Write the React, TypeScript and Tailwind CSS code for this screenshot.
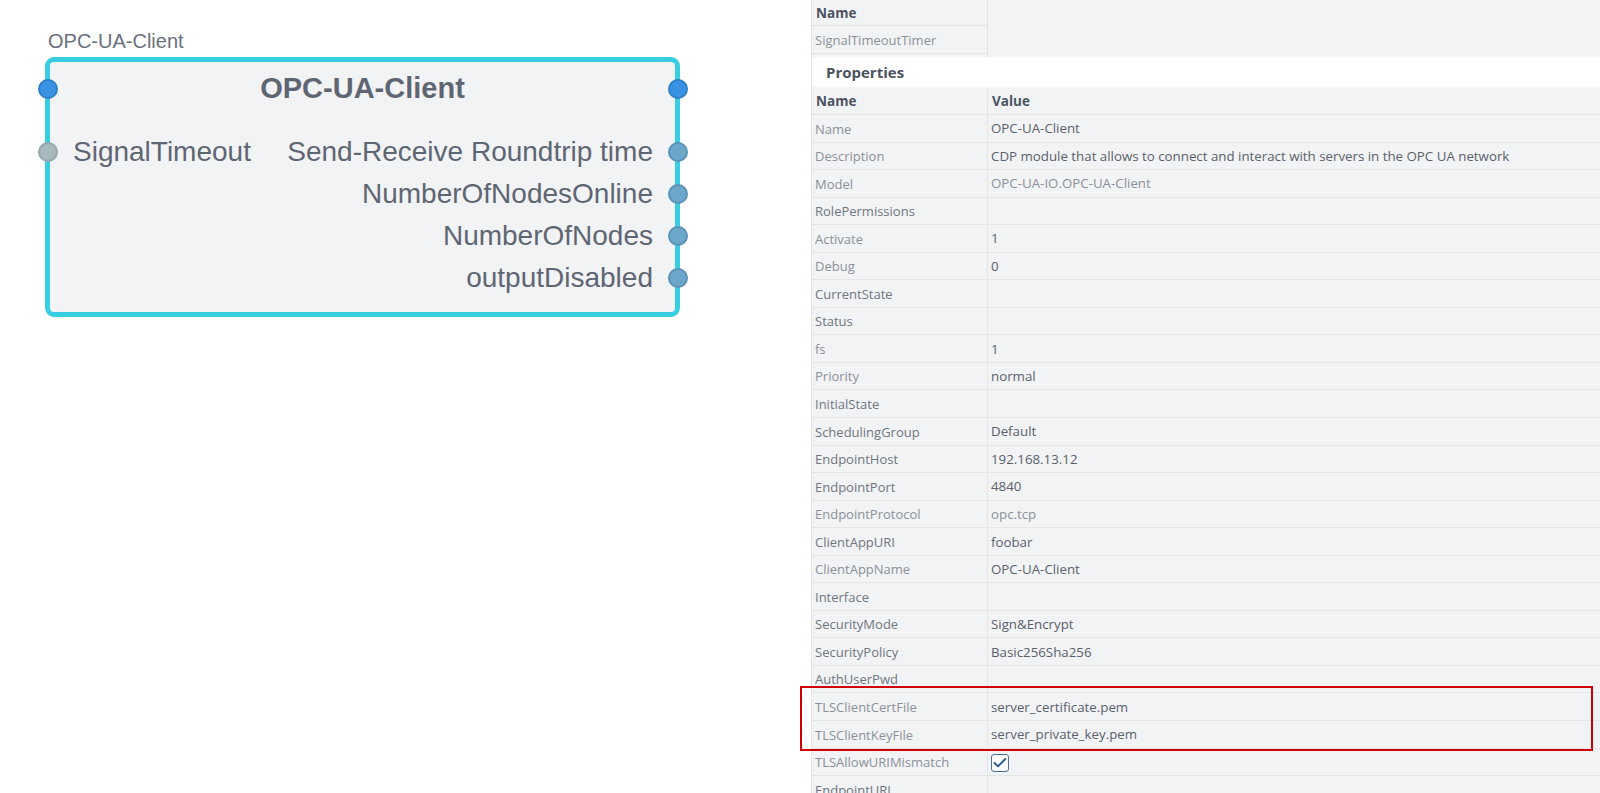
import { Check } from 'lucide-react'

type Prop = { name: string; value?: string; dimName?: boolean; dimValue?: boolean; check?: boolean }

const props: Prop[] = [
  { name: 'Name', value: 'OPC-UA-Client', dimName: true },
  { name: 'Description', value: 'CDP module that allows to connect and interact with servers in the OPC UA network', dimName: true },
  { name: 'Model', value: 'OPC-UA-IO.OPC-UA-Client', dimName: true, dimValue: true },
  { name: 'RolePermissions' },
  { name: 'Activate', value: '1', dimName: true },
  { name: 'Debug', value: '0', dimName: true },
  { name: 'CurrentState' },
  { name: 'Status' },
  { name: 'fs', value: '1', dimName: true },
  { name: 'Priority', value: 'normal', dimName: true },
  { name: 'InitialState' },
  { name: 'SchedulingGroup', value: 'Default' },
  { name: 'EndpointHost', value: '192.168.13.12' },
  { name: 'EndpointPort', value: '4840' },
  { name: 'EndpointProtocol', value: 'opc.tcp', dimName: true, dimValue: true },
  { name: 'ClientAppURI', value: 'foobar' },
  { name: 'ClientAppName', value: 'OPC-UA-Client', dimName: true },
  { name: 'Interface' },
  { name: 'SecurityMode', value: 'Sign&Encrypt' },
  { name: 'SecurityPolicy', value: 'Basic256Sha256' },
  { name: 'AuthUserPwd' },
  { name: 'TLSClientCertFile', value: 'server_certificate.pem', dimName: true },
  { name: 'TLSClientKeyFile', value: 'server_private_key.pem', dimName: true },
  { name: 'TLSAllowURIMismatch', check: true, dimName: true },
  { name: 'EndpointURL' },
]

const outputs = ['Send-Receive Roundtrip time', 'NumberOfNodesOnline', 'NumberOfNodes', 'outputDisabled']

function Port({ kind, side }: { kind: 'event' | 'input' | 'output'; side: 'left' | 'right' }) {
  const color =
    kind === 'event'
      ? 'bg-[#3a93e2] border-[#2f7fc6]'
      : kind === 'input'
        ? 'bg-[#a9b8bd] border-[#97a7ad]'
        : 'bg-[#6ca7ca] border-[#5a93b6]'
  return (
    <span
      className={`absolute top-1/2 -translate-y-1/2 w-[20px] h-[20px] rounded-full border-2 ${color} ${
        side === 'left' ? '-left-[12.5px]' : '-right-[12.5px]'
      }`}
    />
  )
}

function Block() {
  return (
    <div className="absolute left-[45px] top-[31px] font-['Liberation_Sans',Arial,sans-serif]">
      <div className="h-[20px] leading-[20px] pl-[3px] mb-[6px] text-[20px] text-[#6b717b]">OPC-UA-Client</div>
      <div className="w-[635px] h-[260px] rounded-[9px] border-[5px] border-[#38cde0] bg-[#f2f3f5] text-[#5f6673]">
        <div className="relative h-[53px] flex items-center justify-center">
          <Port kind="event" side="left" />
          <span className="text-[29px] font-bold leading-none">OPC-UA-Client</span>
          <Port kind="event" side="right" />
        </div>
        <div className="pt-[16px]">
          {outputs.map((o, i) => (
            <div key={o} className="relative h-[42px] flex items-center justify-between pl-[23px] pr-[22px]">
              {i === 0 ? (
                <>
                  <Port kind="input" side="left" />
                  <span className="text-[28px] leading-none">SignalTimeout</span>
                </>
              ) : (
                <span />
              )}
              <span className="text-[28px] leading-none">{o}</span>
              <Port kind="output" side="right" />
            </div>
          ))}
        </div>
      </div>
    </div>
  )
}

export default function App() {
  return (
    <div className="relative w-[1600px] h-[793px] flex overflow-hidden bg-white">
      <div className="relative w-[811px] shrink-0">
        <Block />
      </div>

      <div className="flex-1 flex flex-col bg-[#f2f3f5] border-l border-[#e1e3e6] font-['Open_Sans','Noto_Sans',sans-serif] text-[13px] overflow-hidden">
        <div className="w-[176px] border-r border-[#e1e3e6]">
          <div className="h-[26px] flex items-center pl-[4px] pt-[2px] border-b border-[#e1e3e6] font-bold text-[13.5px] text-[#4b5361]">
            Name
          </div>
          <div className="h-[28px] flex items-center pl-[3px] pt-[2px] border-b border-[#e1e3e6] text-[#8b9199]">
            SignalTimeoutTimer
          </div>
          <div className="h-[3px]" />
        </div>

        <div className="h-[30px] shrink-0 bg-white flex items-center pl-[14px] pt-[1px] font-bold text-[15px] text-[#4b5361]">
          Properties
        </div>

        <div className="h-[28px] shrink-0 flex border-b border-[#e1e3e6] pt-[2px] font-bold text-[13.5px] text-[#4b5361]">
          <div className="w-[176px] border-r border-[#e1e3e6] flex items-center pl-[4px]">Name</div>
          <div className="flex-1 flex items-center pl-[4px]">Value</div>
        </div>

        {props.map((p) => (
          <div key={p.name} className="h-[27.55px] shrink-0 flex border-b border-[#e3e5e8]">
            <div
              className={`w-[176px] border-r border-[#e3e5e8] flex items-center pl-[3px] pt-[2px] ${
                p.dimName ? 'text-[#8b9199]' : 'text-[#6f7680]'
              }`}
            >
              {p.name}
            </div>
            <div
              className={`flex-1 flex items-center pl-[3px] pt-[2px] text-[13.3px] ${
                p.dimValue ? 'text-[#8b9199]' : 'text-[#5a616c]'
              }`}
            >
              {p.check ? (
                <span className="w-[18px] h-[18px] rounded-[3px] border border-[#4a6f99] bg-white flex items-center justify-center">
                  <Check size={16} strokeWidth={3} className="text-[#2d5b8e]" />
                </span>
              ) : (
                p.value
              )}
            </div>
          </div>
        ))}
      </div>

      <div className="absolute left-[800px] top-[686px] w-[793px] h-[65px] border-2 border-[#d00000] pointer-events-none" />
    </div>
  )
}
